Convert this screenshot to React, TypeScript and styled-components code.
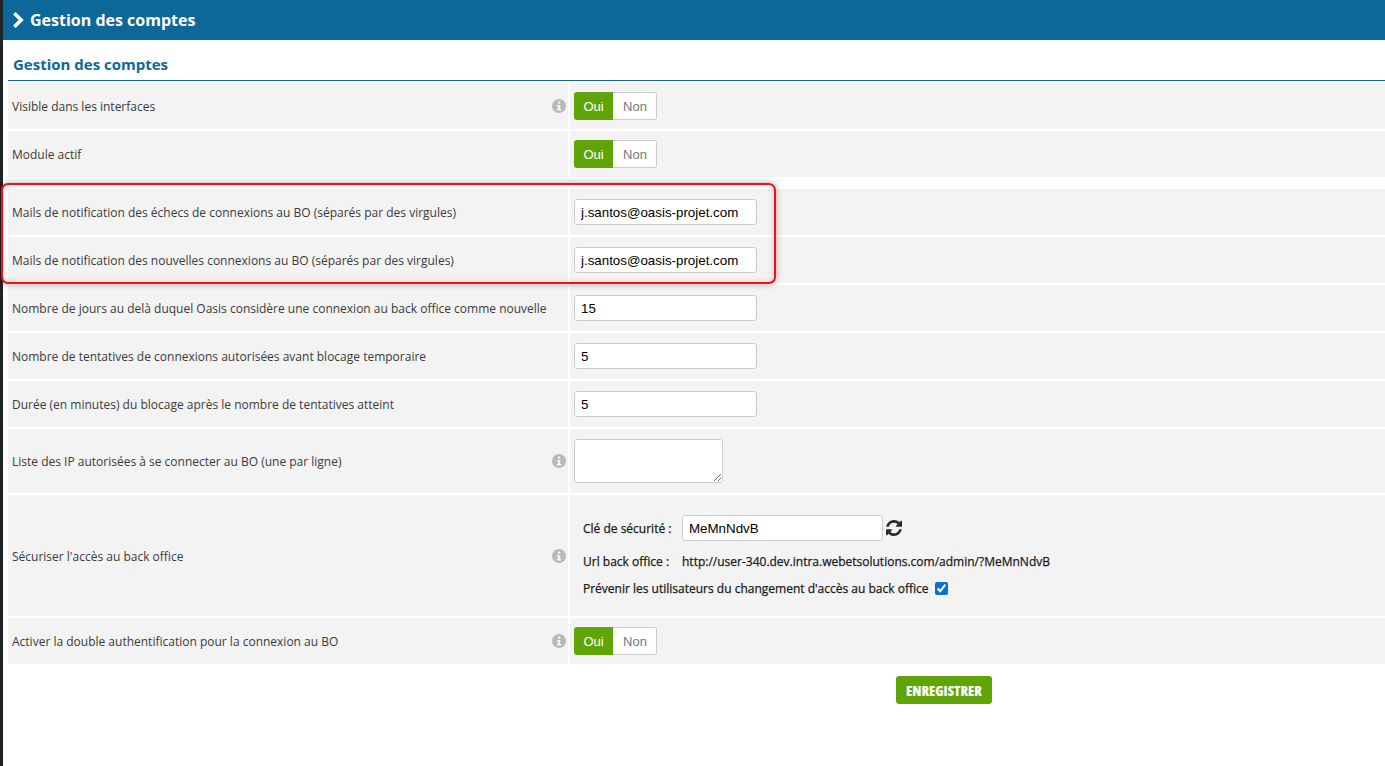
import React from "react";
import styled, { createGlobalStyle } from "styled-components";

const Global = createGlobalStyle`
  html, body { margin: 0; padding: 0; background: #fff; height: 100%; }
  body { font-family: "Open Sans", "Noto Sans", sans-serif; overflow: hidden; }
  * { box-sizing: border-box; }
`;

const Page = styled.div`
  position: relative;
  width: 1385px;
  height: 766px;
  padding-left: 3px;
  background: #fff;
  overflow: hidden;
  &::before {
    content: "";
    position: absolute;
    left: 0;
    top: 0;
    bottom: 0;
    width: 3px;
    background: #1f2326;
  }
`;

const Banner = styled.header`
  height: 40px;
  background: #0d6799;
  display: flex;
  align-items: center;
  padding-left: 10px;
  gap: 5px;
  color: #fff;
  font-size: 16px;
  font-weight: 700;
`;

const Main = styled.main`
  padding-left: 5px;
`;

const SectionTitle = styled.h2`
  margin: 0;
  height: 41px;
  padding: 14px 0 0 5px;
  font-size: 15px;
  line-height: 20px;
  font-weight: 700;
  color: #0d6799;
  border-bottom: 1px solid #0d6799;
`;

const Row = styled.div<{ $h: number; $after?: number }>`
  display: grid;
  grid-template-columns: 560px 1fr;
  column-gap: 2px;
  height: ${(p) => p.$h}px;
  margin-top: ${(p) => p.$after ?? 2}px;
`;

const LabelCell = styled.div<{ $nudge?: boolean }>`
  background: #f3f3f3;
  display: flex;
  align-items: center;
  justify-content: space-between;
  padding: ${(p) => (p.$nudge ? "1px" : "0")} 2px 0 4px;
  font-size: 12px;
  color: #3a3a3a;
`;

const ValueCell = styled.div<{ $nudge?: boolean }>`
  background: #f3f3f3;
  display: flex;
  align-items: center;
  padding: ${(p) => (p.$nudge ? "1px" : "0")} 0 0 4px;
`;

const InfoIcon = styled.svg`
  width: 14px;
  height: 14px;
  display: block;
`;

const Info = () => (
  <InfoIcon viewBox="0 0 14 14">
    <circle cx="7" cy="7" r="7" fill="#b9b9b9" />
    <rect x="5.9" y="2.6" width="2.3" height="2.2" rx="0.4" fill="#f3f3f3" />
    <path d="M4.9 6h3.3v4h1v1.4H4.9V10h1V7.3h-1z" fill="#f3f3f3" />
  </InfoIcon>
);

const Toggle = styled.div`
  display: flex;
  height: 28px;
  font-family: "Liberation Sans", Arial, sans-serif;
  font-size: 13px;
`;

const ToggleOn = styled.span`
  width: 39px;
  background: #5fa508;
  color: #fff;
  border-radius: 3px 0 0 3px;
  display: flex;
  align-items: center;
  justify-content: center;
`;

const ToggleOff = styled.span`
  width: 44px;
  padding-left: 1px;
  background: #fff;
  color: #777;
  border: 1px solid #ccc;
  border-left: 0;
  border-radius: 0 3px 3px 0;
  display: flex;
  align-items: center;
  justify-content: center;
`;

const OuiNon = () => (
  <Toggle>
    <ToggleOn>Oui</ToggleOn>
    <ToggleOff>Non</ToggleOff>
  </Toggle>
);

const TextInput = styled.input`
  width: 183px;
  height: 26px;
  border: 1px solid #ccc;
  border-radius: 3px;
  background: #fff;
  padding: 0 6px;
  font-family: "Liberation Sans", Arial, sans-serif;
  font-size: 13.333px;
  color: #000;
  outline: none;
`;

const TextArea = styled.textarea`
  display: block;
  width: 149px;
  height: 44px;
  border: 1px solid #ccc;
  border-radius: 3px;
  background: #fff;
  outline: none;
`;

const SecurityBox = styled.div`
  padding: 1px 0 0 9px;
  font-size: 12px;
  color: #1a1a1a;
  -webkit-text-stroke: 0.25px #1a1a1a;
  display: flex;
  flex-direction: column;
`;

const SecLine = styled.div<{ $mt?: number }>`
  display: flex;
  align-items: center;
  margin-top: ${(p) => p.$mt ?? 0}px;
`;

const SecLabel = styled.span`
  width: 99px;
`;

const KeyInput = styled(TextInput)`
  width: 201px;
  -webkit-text-stroke: 0;
`;

const RefreshIcon = styled.svg`
  width: 16px;
  height: 16px;
  margin-left: 3px;
  display: block;
`;

const Check = styled.input`
  width: 13px;
  height: 13px;
  margin: 0 0 0 7px;
  accent-color: #0a6fd6;
`;

const Footer = styled.div`
  display: flex;
  padding: 12px 0 0 888px;
`;

const SaveButton = styled.button`
  width: 96px;
  height: 28px;
  border: 0;
  border-radius: 3px;
  background: #5fa508;
  color: #fff;
  font-family: "Open Sans", sans-serif;
  font-size: 14px;
  font-stretch: 75%;
  font-weight: 800;
  padding: 0;
`;

const Highlight = styled.div`
  position: absolute;
  left: 1px;
  top: 183px;
  width: 775px;
  height: 101px;
  border: 2px solid #f0101a;
  border-radius: 7px;
  box-shadow: 0 0 7px rgba(0, 0, 0, 0.32), inset 0 0 7px rgba(0, 0, 0, 0.14);
  pointer-events: none;
`;

const Chevron = () => (
  <svg width="12" height="16" viewBox="0 0 12 16" style={{ display: "block" }}>
    <path d="M2.6 2.4l5.6 5.6-5.6 5.6" fill="none" stroke="#fff" strokeWidth="3.6" strokeLinecap="square" />
  </svg>
);

const mail = "j.santos@oasis-projet.com";

export default function App() {
  return (
    <Page>
      <Global />
      <Banner>
        <Chevron />
        Gestion des comptes
      </Banner>
      <Main>
        <SectionTitle>Gestion des comptes</SectionTitle>
        <Row $h={47} $after={1}>
          <LabelCell $nudge>Visible dans les interfaces<Info /></LabelCell>
          <ValueCell $nudge><OuiNon /></ValueCell>
        </Row>
        <Row $h={46}>
          <LabelCell>Module actif</LabelCell>
          <ValueCell><OuiNon /></ValueCell>
        </Row>
        <Row $h={46} $after={12}>
          <LabelCell>Mails de notification des échecs de connexions au BO (séparés par des virgules)</LabelCell>
          <ValueCell><TextInput readOnly value={mail} /></ValueCell>
        </Row>
        <Row $h={46}>
          <LabelCell>Mails de notification des nouvelles connexions au BO (séparés par des virgules)</LabelCell>
          <ValueCell><TextInput readOnly value={mail} /></ValueCell>
        </Row>
        <Row $h={46}>
          <LabelCell>Nombre de jours au delà duquel Oasis considère une connexion au back office comme nouvelle</LabelCell>
          <ValueCell><TextInput readOnly value="15" /></ValueCell>
        </Row>
        <Row $h={46}>
          <LabelCell>Nombre de tentatives de connexions autorisées avant blocage temporaire</LabelCell>
          <ValueCell><TextInput readOnly value="5" /></ValueCell>
        </Row>
        <Row $h={46}>
          <LabelCell>Durée (en minutes) du blocage après le nombre de tentatives atteint</LabelCell>
          <ValueCell><TextInput readOnly value="5" /></ValueCell>
        </Row>
        <Row $h={64}>
          <LabelCell>Liste des IP autorisées à se connecter au BO (une par ligne)<Info /></LabelCell>
          <ValueCell><TextArea readOnly /></ValueCell>
        </Row>
        <Row $h={121}>
          <LabelCell $nudge>Sécuriser l'accès au back office<Info /></LabelCell>
          <ValueCell>
            <SecurityBox>
              <SecLine>
                <SecLabel>Clé de sécurité :</SecLabel>
                <KeyInput readOnly value="MeMnNdvB" />
                <RefreshIcon viewBox="0 0 1536 1536">
                  <path fill="#2b2b2b" d="M1511 928q0 5-1 7-64 268-268 434.500t-478 166.500q-146 0-282.500-55t-243.500-157l-129 129q-19 19-45 19t-45-19-19-45v-448q0-26 19-45t45-19h448q26 0 45 19t19 45-19 45l-137 137q71 66 161 102t187 36q134 0 250-65t186-179q11-17 53-117 8-23 30-23h192q13 0 22.500 9.500t9.500 22.500zM1536 128v448q0 26-19 45t-45 19h-448q-26 0-45-19t-19-45 19-45l138-138q-148-137-349-137-134 0-250 65t-186 179q-11 17-53 117-8 23-30 23h-199q-13 0-22.500-9.500t-9.500-22.500v-7q65-268 270-434.500t480-166.500q146 0 284 55.500t245 156.500l130-129q19-19 45-19t45 19 19 45z" />
                </RefreshIcon>
              </SecLine>
              <SecLine $mt={12}>
                <SecLabel>Url back office :</SecLabel>
                <span>http://user-340.dev.intra.webetsolutions.com/admin/?MeMnNdvB</span>
              </SecLine>
              <SecLine $mt={10}>
                <span>Prévenir les utilisateurs du changement d'accès au back office</span>
                <Check type="checkbox" readOnly checked />
              </SecLine>
            </SecurityBox>
          </ValueCell>
        </Row>
        <Row $h={46}>
          <LabelCell>Activer la double authentification pour la connexion au BO<Info /></LabelCell>
          <ValueCell><OuiNon /></ValueCell>
        </Row>
        <Footer>
          <SaveButton>ENREGISTRER</SaveButton>
        </Footer>
      </Main>
      <Highlight />
    </Page>
  );
}
